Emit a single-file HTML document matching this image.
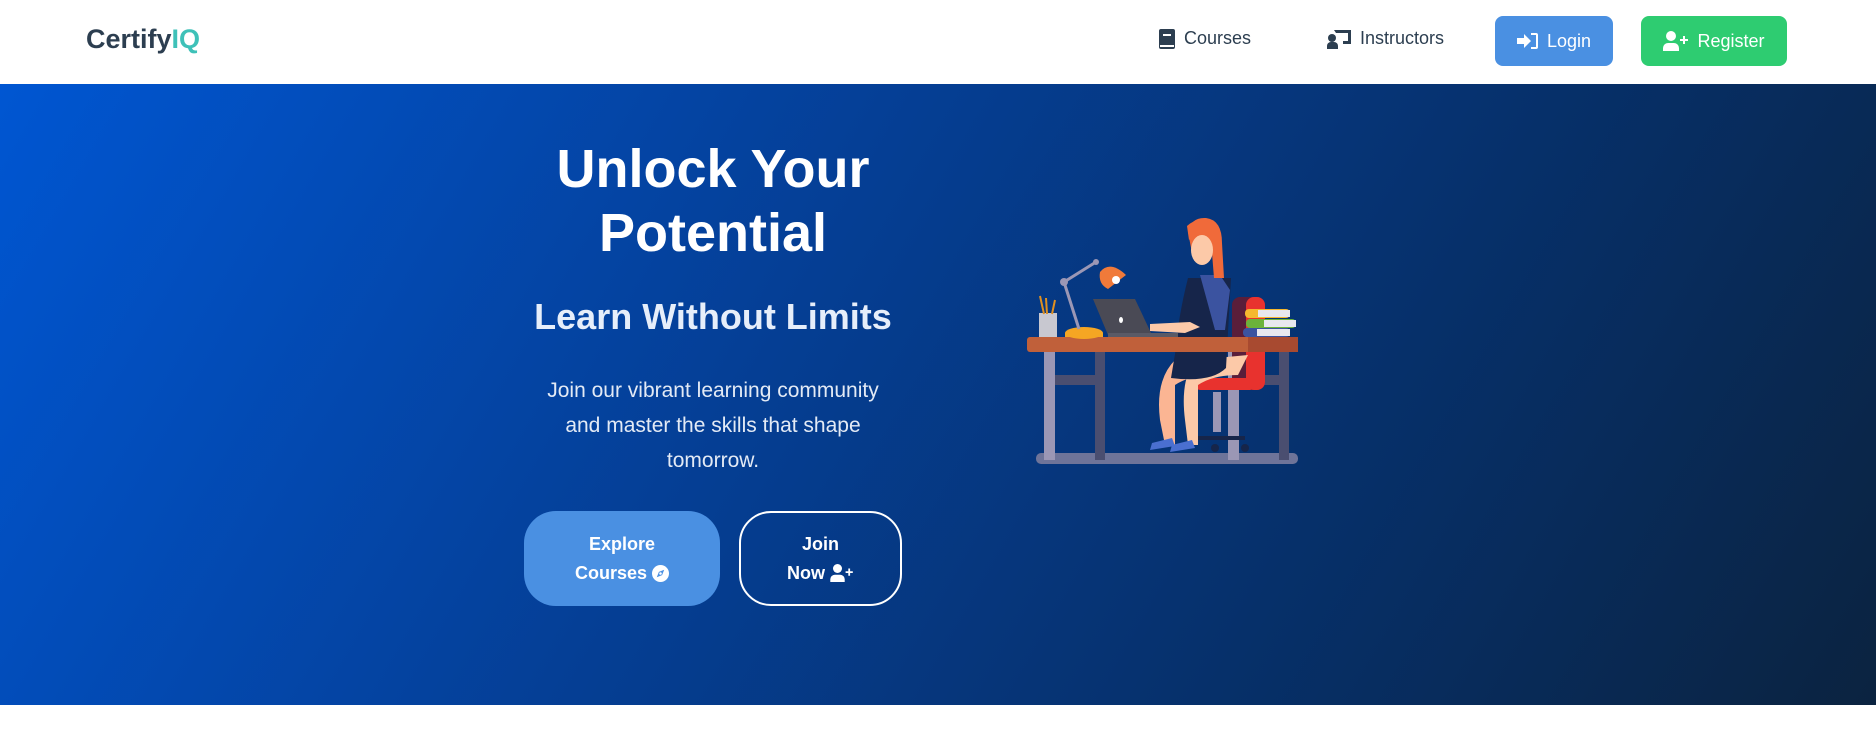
<!DOCTYPE html>
<html><head><meta charset="utf-8"><style>
*{margin:0;padding:0;box-sizing:border-box}
body{width:1876px;height:745px;overflow:hidden;background:#fff;font-family:"Liberation Sans",Arial,sans-serif;position:relative}
nav{position:absolute;left:0;top:0;width:1876px;height:84px;background:#fff}
.logo{position:absolute;left:86px;top:24px;font-size:27px;font-weight:bold;color:#2c3e50}
.logo span{color:#3ec1b8}
.nl{position:absolute;top:28px;font-size:18px;color:#2c3e50;display:flex;align-items:center;gap:8px}
.btn{position:absolute;top:16px;height:50px;border-radius:8px;color:#fff;font-size:18px;display:flex;align-items:center;justify-content:center;gap:8px}
.hero{position:absolute;left:0;top:84px;width:1876px;height:621px;background:linear-gradient(120deg,#0056d2 0%,#053f96 40%,#06306a 70%,#0b2340 100%)}
.t{position:absolute;left:463px;width:500px;text-align:center;color:#fff}
h1{font-size:54px;line-height:64px;font-weight:bold}
.b2{position:absolute;top:511px;height:95px;border-radius:32px;color:#fff;font-weight:bold;font-size:18px;line-height:29px;text-align:center;display:flex;align-items:center;justify-content:center}
.b2 svg{vertical-align:-3px}
</style></head><body>
<nav>
<div class="logo">Certify<span>IQ</span></div>
<div class="nl" style="left:1159px"><svg width="17" height="20" viewBox="0 0 17 20"><rect x="0" y="0" width="16" height="20" rx="2" fill="#2c3e50"/><rect x="4" y="5" width="8" height="2" fill="#fff"/><rect x="1" y="16" width="14" height="2" fill="#fff"/></svg>Courses</div>
<div class="nl" style="left:1327px"><svg width="25" height="20" viewBox="0 0 25 20"><path d="M7 1h17v14h-8v-3h5V4H9z" fill="#2c3e50"/><circle cx="5" cy="9" r="4" fill="#2c3e50"/><path d="M0 20v-3a4 4 0 0 1 4-4h3a4 4 0 0 1 4 4v3z" fill="#2c3e50"/></svg>Instructors</div>
<div class="btn" style="left:1495px;width:118px;background:#4a90e2"><svg width="22" height="18" viewBox="0 0 22 18"><path d="M0 6h7V2l7 7-7 7v-4H0z" fill="#fff"/><path d="M14 1h5a2 2 0 0 1 2 2v12a2 2 0 0 1-2 2h-5v-2h5V3h-5z" fill="#fff"/></svg>Login</div>
<div class="btn" style="left:1641px;width:146px;background:#2ecc71"><svg width="26" height="20" viewBox="0 0 26 20"><circle cx="8" cy="5" r="5" fill="#fff"/><path d="M0 20v-3a5 5 0 0 1 5-5h6a5 5 0 0 1 5 5v3z" fill="#fff"/><path d="M20 5h2v3h3v2h-3v3h-2v-3h-3V8h3z" fill="#fff"/></svg>Register</div>
</nav>
<div class="hero"></div>
<h1 class="t" style="top:137px">Unlock Your<br>Potential</h1>
<div class="t" style="top:296px;font-size:36px;font-weight:bold;color:#e6eefa">Learn Without Limits</div>
<div class="t" style="top:373px;left:540px;width:346px;font-size:21px;line-height:35px;color:#e3eaf5">Join our vibrant learning community and master the skills that shape tomorrow.</div>
<div class="b2" style="left:524px;width:196px;background:#4a90e2"><div>Explore<br>Courses <svg width="17" height="17" viewBox="0 0 16 16"><circle cx="8" cy="8" r="8" fill="#fff"/><path d="M11.5 4.5L9.5 9.5 4.5 11.5 6.5 6.5z" fill="#4a90e2"/><circle cx="8" cy="8" r="1.2" fill="#fff"/></svg></div></div>
<div class="b2" style="left:739px;width:163px;border:2px solid #fff"><div>Join<br>Now <svg width="24" height="18" viewBox="0 0 26 20"><circle cx="8" cy="5" r="5" fill="#fff"/><path d="M0 20v-3a5 5 0 0 1 5-5h6a5 5 0 0 1 5 5v3z" fill="#fff"/><path d="M20 5h2v3h3v2h-3v3h-2v-3h-3V8h3z" fill="#fff"/></svg></div></div>
<svg style="position:absolute;left:1000px;top:200px" width="330" height="280" viewBox="0 0 330 280">
<rect x="36" y="253" width="262" height="11" rx="5" fill="#6e7499"/>
<rect x="44" y="150" width="11" height="110" fill="#9b97b5"/><rect x="95" y="150" width="10" height="110" fill="#4a4e70"/><rect x="55" y="175" width="40" height="10" fill="#4a4e70"/>
<rect x="228" y="150" width="11" height="110" fill="#9b97b5"/><rect x="279" y="150" width="10" height="110" fill="#4a4e70"/><rect x="239" y="175" width="40" height="10" fill="#4a4e70"/>
<rect x="232" y="97" width="33" height="93" rx="8" fill="#5a1e3a"/><rect x="246" y="97" width="19" height="93" rx="8" fill="#e8322e"/><rect x="195" y="178" width="60" height="12" rx="5" fill="#e8322e"/>
<rect x="213" y="192" width="8" height="40" fill="#9b97b5"/><path d="M195 236h50v4h-50z" fill="#16254a"/><circle cx="215" cy="248" r="4" fill="#16254a"/><circle cx="245" cy="248" r="4" fill="#16254a"/>
<path d="M175 160q-20 20-15 60l5 25h10l0-60q15-10 40-10l10-20z" fill="#fbb593"/>
<path d="M195 160q-15 20-10 60l3 25h10l0-60q15-10 40-10l10-20z" fill="#fcc9a8"/>
<path d="M152 243l20-5 3 8-25 4z" fill="#4a6fd0"/><path d="M172 245l20-5 3 8-25 4z" fill="#4a6fd0"/>
<path d="M188 78q-10 40-12 70l-5 30q40 5 55-10l5-90z" fill="#16254a"/>
<path d="M200 75h20l10 15-5 40h-10z" fill="#3b53a0"/>
<path d="M188 32q3-15 18-14q16 2 16 25l2 35h-10l-2-25h-20z" fill="#f06a3a"/>
<ellipse cx="202" cy="50" rx="11" ry="15" fill="#fcc9a8"/>
<path d="M189 40q8-16 26-8v-6q-15-12-28 0z" fill="#f06a3a"/>
<path d="M150 124l40-2 10 5-15 6-35-2z" fill="#fcc9a8"/>
<rect x="27" y="137" width="271" height="15" rx="3" fill="#c0603a"/><rect x="248" y="137" width="50" height="15" fill="#a84a30"/>
<path d="M93 99h42l17 36h-44z" fill="#4a4a55"/><ellipse cx="121" cy="120" rx="2" ry="3" fill="#fff"/><rect x="108" y="133" width="70" height="4" fill="#5a5a66"/>
<ellipse cx="84" cy="133" rx="19" ry="6" fill="#f5a623"/><rect x="65" y="133" width="38" height="4" fill="#f5a623"/>
<path d="M79 129L64 82L96 62" stroke="#9b97b5" stroke-width="3" fill="none"/><circle cx="64" cy="82" r="4" fill="#9b97b5"/><circle cx="96" cy="62" r="3" fill="#9b97b5"/>
<path d="M100 72q10-12 26 3l-18 14q-10-5-8-17z" fill="#f07a3a"/><circle cx="116" cy="80" r="4" fill="#fff"/>
<rect x="39" y="113" width="18" height="24" fill="#c8c8d0"/><path d="M40 96l4 18M46 98l1 16M55 100l-3 14" stroke="#e09020" stroke-width="2"/>
<rect x="245" y="109" width="45" height="9" rx="4" fill="#f5b82e"/><rect x="258" y="110" width="32" height="7" fill="#e8e8ee"/>
<rect x="246" y="119" width="50" height="9" rx="4" fill="#6bb33a"/><rect x="264" y="120" width="32" height="7" fill="#e8e8ee"/>
<rect x="243" y="128" width="47" height="9" rx="4" fill="#3b53a0"/><rect x="257" y="129" width="33" height="7" fill="#e8e8ee"/>
</svg>
</body></html>
